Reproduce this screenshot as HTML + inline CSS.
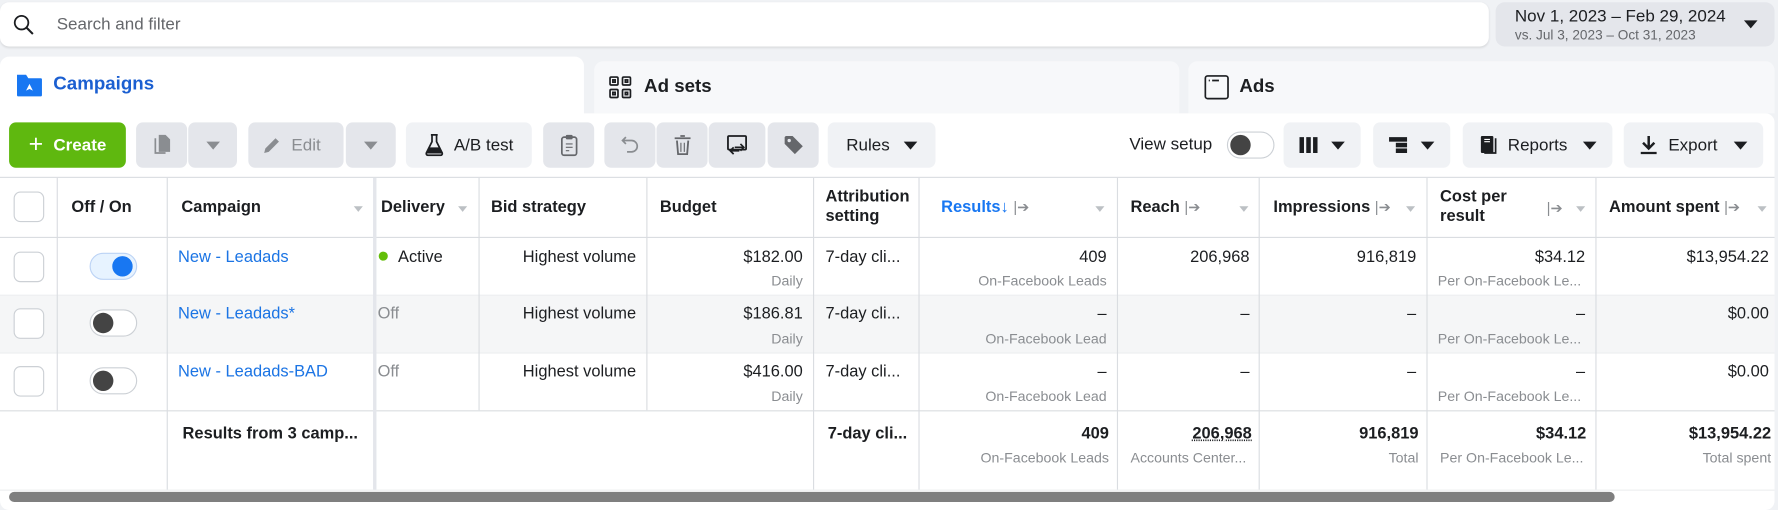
<!DOCTYPE html>
<html><head><meta charset="utf-8"><style>
*{box-sizing:border-box;margin:0;padding:0}
html,body{width:1778px;height:510px;overflow:hidden;background:#f0f2f5}
#w{position:absolute;left:0;top:0;width:1568px;height:450px;transform:scale(1.1339,1.1333);transform-origin:0 0;font-family:"Liberation Sans",Arial,sans-serif;color:#1c1e21;font-size:14.5px}
.a{position:absolute}
.btn{position:absolute;top:108px;height:40px;background:#e4e6eb;border-radius:6px;display:flex;align-items:center;justify-content:center;color:#1c1e21;font-size:15px}
.dis{color:#8a8d91}
.tri{display:inline-block;width:0;height:0;border-left:6px solid transparent;border-right:6px solid transparent;border-top:7px solid #1c1e21}
.vl{position:absolute;width:1px;background:#dadde1}
.hl{position:absolute;height:1px;background:#dadde1;left:0;width:1565px}
.c{position:absolute;white-space:nowrap;overflow:hidden}
.r{text-align:right}
.sub{font-size:12.5px;color:#8a8d91}
.hd{font-weight:bold;font-size:14.5px}
.st{position:absolute;width:0;height:0;border-left:4px solid transparent;border-right:4px solid transparent;border-top:5px solid #bcc0c4}
.pin{color:#8a8d91;font-weight:normal;font-size:13px}
.lnk{color:#1b74e4}
.cb{position:absolute;left:12px;width:27px;height:27px;border:1px solid #ccd0d5;border-radius:6px;background:#fff}
.tg{position:absolute;left:79px;width:42px;height:24px;border:1px solid #ccd0d5;border-radius:12px;background:#fff}
.tg i{position:absolute;left:2px;top:2px;width:18px;height:18px;border-radius:50%;background:#444}
</style></head><body><div id="w">
<!-- search -->
<div class="a" style="left:0;top:2px;width:1313px;height:39px;background:#fff;border-radius:8px;box-shadow:0 1px 2px rgba(0,0,0,.1)"></div>
<svg class="a" style="left:11px;top:12px" width="20" height="20" viewBox="0 0 20 20"><circle cx="8" cy="8" r="6" fill="none" stroke="#1c1e21" stroke-width="1.6"/><path d="M12.5 12.5L18 18" stroke="#1c1e21" stroke-width="1.8"/></svg>
<div class="a" style="left:50px;top:13px;color:#65676b;font-size:15px">Search and filter</div>
<div class="a" style="left:1319px;top:2px;width:246px;height:39px;background:#e4e6eb;border-radius:8px"></div>
<div class="a" style="left:1336px;top:6px;font-size:15px">Nov 1, 2023 – Feb 29, 2024</div>
<div class="a" style="left:1336px;top:24px;font-size:12px;color:#65676b">vs. Jul 3, 2023 – Oct 31, 2023</div>
<div class="a tri" style="left:1538px;top:18px;border-top-color:#1c1e21"></div>
<!-- tabs -->
<div class="a" style="left:0;top:50px;width:515px;height:60px;background:#fff;border-radius:8px 8px 0 0"></div>
<div class="a" style="left:524px;top:54px;width:516px;height:46px;background:#f7f8fa;border-radius:8px 8px 0 0"></div>
<div class="a" style="left:1048px;top:54px;width:517px;height:46px;background:#f7f8fa;border-radius:8px 8px 0 0"></div>
<svg class="a" style="left:14px;top:64px" width="24" height="22" viewBox="0 0 24 22"><path d="M1 2h8l2 3h11a1 1 0 0 1 1 1v14a1 1 0 0 1-1 1H2a1 1 0 0 1-1-1z" fill="#1877f2"/><path d="M9 16l3-6 3 6-3-1.5z" fill="#fff"/></svg>
<div class="a" style="left:47px;top:65px;color:#1b5fd1;font-weight:bold;font-size:16.5px">Campaigns</div>
<svg class="a" style="left:537px;top:67px" width="20" height="20" viewBox="0 0 20 20" fill="none" stroke="#1c1e21" stroke-width="1.5"><rect x="1" y="1" width="7" height="7" rx="1"/><rect x="12" y="1" width="7" height="7" rx="1"/><rect x="1" y="12" width="7" height="7" rx="1"/><rect x="12" y="12" width="7" height="7" rx="1"/><rect x="3.5" y="3.5" width="2" height="2"/><rect x="14.5" y="3.5" width="2" height="2"/><rect x="3.5" y="14.5" width="2" height="2"/><rect x="14.5" y="14.5" width="2" height="2"/></svg>
<div class="a" style="left:568px;top:67px;font-weight:bold;font-size:16.5px">Ad sets</div>
<svg class="a" style="left:1062px;top:66px" width="22" height="22" viewBox="0 0 22 22" fill="none" stroke="#1c1e21" stroke-width="1.5"><rect x="1" y="1" width="20" height="20" rx="2"/><path d="M4 5h1M7 5h6"/></svg>
<div class="a" style="left:1093px;top:67px;font-weight:bold;font-size:16.5px">Ads</div>
<!-- panel -->
<div class="a" style="left:0;top:100px;width:1565px;height:350px;background:#fff;border-radius:0 8px 8px 8px"></div>
<!-- toolbar -->
<div class="btn" style="left:8px;width:103px;background:#5fb80f;color:#fff;font-weight:bold"><span style="font-size:22px;font-weight:normal;margin-right:9px;margin-top:-3px">+</span>Create</div>
<div class="btn" style="left:120px;width:45px"><svg width="18" height="20" viewBox="0 0 18 20"><path d="M6 1h6l4 4v11H6z" fill="#8a8d91"/><path d="M3 4v13h9" stroke="#8a8d91" stroke-width="1.5" fill="none"/></svg></div>
<div class="btn" style="left:166px;width:43px"><span class="tri" style="border-top-color:#8a8d91"></span></div>
<div class="btn dis" style="left:219px;width:84px;justify-content:flex-start;padding-left:12px"><svg width="18" height="18" viewBox="0 0 18 18" style="margin-right:8px"><path d="M2 16l1-4 9-9 3 3-9 9z" fill="#8a8d91"/></svg>Edit</div>
<div class="btn" style="left:305px;width:44px"><span class="tri" style="border-top-color:#8a8d91"></span></div>
<div class="btn" style="left:358px;width:111px;background:#f0f2f5"><svg width="18" height="20" viewBox="0 0 18 20" style="margin-right:8px"><path d="M6 1h6M7 1v6l-5 10a1.5 1.5 0 0 0 1.3 2h11.4a1.5 1.5 0 0 0 1.3-2l-5-10V1" fill="none" stroke="#1c1e21" stroke-width="1.5"/><path d="M4.5 12h9l2.5 5.5H2z" fill="#1c1e21"/></svg>A/B test</div>
<div class="btn" style="left:479px;width:45px"><svg width="16" height="20" viewBox="0 0 16 20"><rect x="1.5" y="3" width="13" height="16" rx="2" fill="none" stroke="#65676b" stroke-width="1.5"/><rect x="5" y="1" width="6" height="4" rx="1" fill="#65676b"/><path d="M5 9h6M5 12h6M5 15h3" stroke="#65676b"/></svg></div>
<div class="btn" style="left:533px;width:45px"><svg width="18" height="18" viewBox="0 0 18 18"><path d="M5 2L2 5l3 3M2 5h8a5 5 0 0 1 0 10H6" fill="none" stroke="#8a8d91" stroke-width="1.5"/></svg></div>
<div class="btn" style="left:579px;width:45px"><svg width="16" height="18" viewBox="0 0 16 18"><path d="M1 3h14M6 1h4M3 5l1 12h8l1-12" fill="none" stroke="#65676b" stroke-width="1.6"/><path d="M6.5 7v8M9.5 7v8" stroke="#65676b"/></svg></div>
<div class="btn" style="left:625px;width:50px"><svg width="20" height="20" viewBox="0 0 20 20"><rect x="2" y="2" width="16" height="12" rx="1" fill="none" stroke="#1c1e21" stroke-width="1.6"/><path d="M7 12l-3 3 3 3M13 9l3 3-3 3M4 15h8M8 12h8" fill="none" stroke="#1c1e21" stroke-width="1.5"/></svg></div>
<div class="btn" style="left:677px;width:45px"><svg width="18" height="18" viewBox="0 0 18 18"><path d="M1 2v6l9 9 7-7-9-9H2z" fill="#65676b"/><circle cx="5" cy="5" r="1.5" fill="#e4e6eb"/></svg></div>
<div class="btn" style="left:730px;width:95px;background:#f0f2f5">Rules<span class="tri" style="margin-left:12px"></span></div>
<div class="a" style="left:996px;top:119px;font-size:15px">View setup</div>
<div class="a" style="left:1082px;top:116px;width:42px;height:24px;border:1px solid #ccd0d5;border-radius:12px"><i style="position:absolute;left:2px;top:2px;width:18px;height:18px;border-radius:50%;background:#444"></i></div>
<div class="btn" style="left:1132px;width:68px;background:#f0f2f5"><svg width="16" height="16" viewBox="0 0 16 16" style="margin-right:12px"><rect x="0" y="1" width="4" height="14" fill="#1c1e21"/><rect x="6" y="1" width="4" height="14" fill="#1c1e21"/><rect x="12" y="1" width="4" height="14" fill="#1c1e21"/></svg><span class="tri"></span></div>
<div class="btn" style="left:1211px;width:68px;background:#f0f2f5"><svg width="16" height="16" viewBox="0 0 16 16" style="margin-right:12px"><rect x="0" y="1" width="16" height="4" fill="#1c1e21"/><rect x="6" y="6" width="10" height="4" fill="#1c1e21"/><rect x="6" y="11" width="10" height="4" fill="#1c1e21"/></svg><span class="tri"></span></div>
<div class="btn" style="left:1290px;width:132px;background:#f0f2f5"><svg width="18" height="18" viewBox="0 0 18 18" style="margin-right:8px"><rect x="2" y="1" width="11" height="15" rx="1" fill="#1c1e21"/><path d="M15 3v13H5" fill="none" stroke="#1c1e21" stroke-width="1.5"/><path d="M5 4h5M5 6h5" stroke="#fff"/></svg>Reports<span class="tri" style="margin-left:14px"></span></div>
<div class="btn" style="left:1432px;width:123px;background:#f0f2f5"><svg width="16" height="18" viewBox="0 0 16 18" style="margin-right:9px"><path d="M8 1v10M3 7l5 5 5-5" fill="none" stroke="#1c1e21" stroke-width="2.2"/><path d="M1 16h14" stroke="#1c1e21" stroke-width="2"/></svg>Export<span class="tri" style="margin-left:14px"></span></div>
<!-- table grid -->
<div class="hl" style="top:156px"></div>
<div class="hl" style="top:209px"></div>
<div class="a" style="left:0;top:261px;width:1565px;height:50px;background:#f5f6f7"></div>
<div class="hl" style="top:260px;background:#eceef0"></div>
<div class="hl" style="top:311px;background:#eceef0"></div>
<div class="hl" style="top:362px"></div>
<div class="hl" style="top:432px;background:#eceef0"></div>
<div class="vl" style="left:50px;top:157px;height:205px"></div>
<div class="vl" style="left:147px;top:157px;height:275px"></div>
<div class="a" style="left:329px;top:157px;width:3px;height:275px;background:#e4e6eb"></div>
<div class="vl" style="left:422px;top:157px;height:205px"></div>
<div class="vl" style="left:570px;top:157px;height:205px"></div>
<div class="vl" style="left:717px;top:157px;height:275px"></div>
<div class="vl" style="left:810px;top:157px;height:275px"></div>
<div class="vl" style="left:985px;top:157px;height:275px"></div>
<div class="vl" style="left:1110px;top:157px;height:275px"></div>
<div class="vl" style="left:1258px;top:157px;height:275px"></div>
<div class="vl" style="left:1407px;top:157px;height:275px"></div>
<!-- header -->
<div class="cb" style="top:169px"></div>
<div class="c hd" style="left:63px;top:175px">Off / On</div>
<div class="c hd" style="left:160px;top:175px">Campaign</div><div class="st" style="left:312px;top:182px"></div>
<div class="c hd" style="left:336px;top:175px">Delivery</div><div class="st" style="left:404px;top:182px"></div>
<div class="c hd" style="left:433px;top:175px">Bid strategy</div>
<div class="c hd" style="left:582px;top:175px">Budget</div>
<div class="c hd" style="left:728px;top:166px;line-height:17px">Attribution<br>setting</div>
<div class="c hd" style="left:830px;top:175px;color:#1877f2">Results↓ <span class="pin">|➔</span></div><div class="st" style="left:966px;top:182px"></div>
<div class="c hd" style="left:997px;top:175px">Reach <span class="pin">|➔</span></div><div class="st" style="left:1093px;top:182px"></div>
<div class="c hd" style="left:1123px;top:175px">Impressions <span class="pin">|➔</span></div><div class="st" style="left:1240px;top:182px"></div>
<div class="c hd" style="left:1270px;top:166px;line-height:17px">Cost per<br>result</div><div class="c pin" style="left:1364px;top:176px">|➔</div><div class="st" style="left:1390px;top:182px"></div>
<div class="c hd" style="left:1419px;top:175px">Amount spent <span class="pin">|➔</span></div><div class="st" style="left:1550px;top:182px"></div>
<!-- row1 -->
<div class="cb" style="top:222px"></div>
<div class="tg" style="top:223px;background:#e7f3ff;border-color:#bcd3f5"><i style="left:19px;background:#1877f2"></i></div>
<div class="c lnk" style="left:157px;top:219px">New - Leadads</div>
<div class="a" style="left:334px;top:222px;width:8px;height:8px;border-radius:50%;background:#63be09"></div>
<div class="c" style="left:351px;top:219px">Active</div>
<div class="c r" style="left:430px;width:131px;top:219px">Highest volume</div>
<div class="c r" style="left:575px;width:133px;top:219px">$182.00</div>
<div class="c r sub" style="left:575px;width:133px;top:241px">Daily</div>
<div class="c" style="left:728px;top:219px">7-day cli...</div>
<div class="c r" style="left:815px;width:161px;top:219px">409</div>
<div class="c r sub" style="left:815px;width:161px;top:241px">On-Facebook Leads</div>
<div class="c r" style="left:990px;width:112px;top:219px">206,968</div>
<div class="c r" style="left:1115px;width:134px;top:219px">916,819</div>
<div class="c r" style="left:1262px;width:136px;top:219px">$34.12</div>
<div class="c sub" style="left:1268px;top:241px">Per On-Facebook Le...</div>
<div class="c r" style="left:1410px;width:150px;top:219px">$13,954.22</div>
<!-- row2 -->
<div class="cb" style="top:272px"></div>
<div class="tg" style="top:273px"><i></i></div>
<div class="c lnk" style="left:157px;top:269px">New - Leadads*</div>
<div class="c" style="left:333px;top:269px;color:#8a8d91">Off</div>
<div class="c r" style="left:430px;width:131px;top:269px">Highest volume</div>
<div class="c r" style="left:575px;width:133px;top:269px">$186.81</div>
<div class="c r sub" style="left:575px;width:133px;top:292px">Daily</div>
<div class="c" style="left:728px;top:269px">7-day cli...</div>
<div class="c r" style="left:815px;width:161px;top:269px">–</div>
<div class="c r sub" style="left:815px;width:161px;top:292px">On-Facebook Lead</div>
<div class="c r" style="left:990px;width:112px;top:269px">–</div>
<div class="c r" style="left:1115px;width:134px;top:269px">–</div>
<div class="c r" style="left:1262px;width:136px;top:269px">–</div>
<div class="c sub" style="left:1268px;top:292px">Per On-Facebook Le...</div>
<div class="c r" style="left:1410px;width:150px;top:269px">$0.00</div>
<!-- row3 -->
<div class="cb" style="top:323px"></div>
<div class="tg" style="top:324px"><i></i></div>
<div class="c lnk" style="left:157px;top:320px">New - Leadads-BAD</div>
<div class="c" style="left:333px;top:320px;color:#8a8d91">Off</div>
<div class="c r" style="left:430px;width:131px;top:320px">Highest volume</div>
<div class="c r" style="left:575px;width:133px;top:320px">$416.00</div>
<div class="c r sub" style="left:575px;width:133px;top:343px">Daily</div>
<div class="c" style="left:728px;top:320px">7-day cli...</div>
<div class="c r" style="left:815px;width:161px;top:320px">–</div>
<div class="c r sub" style="left:815px;width:161px;top:343px">On-Facebook Lead</div>
<div class="c r" style="left:990px;width:112px;top:320px">–</div>
<div class="c r" style="left:1115px;width:134px;top:320px">–</div>
<div class="c r" style="left:1262px;width:136px;top:320px">–</div>
<div class="c sub" style="left:1268px;top:343px">Per On-Facebook Le...</div>
<div class="c r" style="left:1410px;width:150px;top:320px">$0.00</div>
<!-- footer -->
<div class="c hd" style="left:161px;top:375px;width:160px">Results from 3 camp...</div>
<div class="c hd" style="left:730px;top:375px">7-day cli...</div>
<div class="c r hd" style="left:815px;width:163px;top:375px">409</div>
<div class="c r sub" style="left:815px;width:163px;top:397px">On-Facebook Leads</div>
<div class="c r hd" style="left:990px;width:114px;top:375px;text-decoration:underline dotted">206,968</div>
<div class="c sub" style="left:997px;top:397px">Accounts Center...</div>
<div class="c r hd" style="left:1115px;width:136px;top:375px">916,819</div>
<div class="c r sub" style="left:1115px;width:136px;top:397px">Total</div>
<div class="c r hd" style="left:1262px;width:137px;top:375px">$34.12</div>
<div class="c sub" style="left:1270px;top:397px">Per On-Facebook Le...</div>
<div class="c r hd" style="left:1410px;width:152px;top:375px">$13,954.22</div>
<div class="c r sub" style="left:1410px;width:152px;top:397px">Total spent</div>
<!-- scrollbar -->
<div class="a" style="left:8px;top:434px;width:1416px;height:9px;border-radius:5px;background:#7f7f7f"></div>
</div></body></html>
